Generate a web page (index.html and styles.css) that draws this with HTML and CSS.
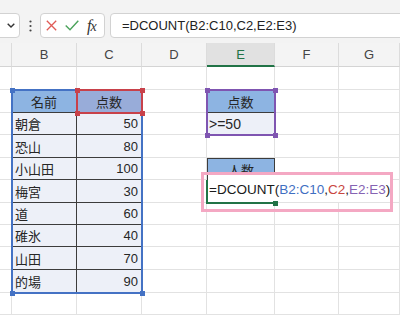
FILE: index.html
```html
<!DOCTYPE html>
<html lang="ja">
<head>
<meta charset="utf-8">
<title>DCOUNT</title>
<link rel="stylesheet" href="styles.css">
</head>
<body>
<div class="app">
  <div class="toolbar">
    <div class="namebox">
      <svg class="chev" width="8" height="5" viewBox="0 0 8 5"><polyline points="0.7,0.7 4,4 7.3,0.7" fill="none" stroke="#333" stroke-width="1.4"/></svg>
    </div>
    <div class="dots">
      <svg width="3" height="12" viewBox="0 0 3 12"><circle cx="1.5" cy="1.5" r="1.1" fill="#444"/><circle cx="1.5" cy="6" r="1.1" fill="#444"/><circle cx="1.5" cy="10.5" r="1.1" fill="#444"/></svg>
    </div>
    <div class="btns">
      <svg class="ico-x" width="11" height="11" viewBox="0 0 11 11"><path d="M0.8 0.8 L10.2 10.2 M10.2 0.8 L0.8 10.2" stroke="#e05a55" stroke-width="1.3" fill="none"/></svg>
      <svg class="ico-ok" width="14" height="11" viewBox="0 0 14 11"><path d="M0.7 5.6 L5 9.8 L13.3 0.8" stroke="#4ba35b" stroke-width="1.4" fill="none"/></svg>
      <span class="fx"><i>f</i><i class="fxx">x</i></span>
    </div>
    <div class="fbar">=DCOUNT(B2:C10,C2,E2:E3)</div>
  </div>

  <div class="sheet">
    <!-- column headers -->
    <div class="ch"></div>
    <div class="ch">B</div>
    <div class="ch">C</div>
    <div class="ch">D</div>
    <div class="ch sel">E</div>
    <div class="ch">F</div>
    <div class="ch">G</div>

    <!-- row 1 -->
    <div class="c"></div><div class="c"></div><div class="c"></div><div class="c"></div><div class="c"></div><div class="c"></div><div class="c"></div>
    <!-- row 2 -->
    <div class="c"></div>
    <div class="c th">名前</div>
    <div class="c th th2">点数</div>
    <div class="c"></div>
    <div class="c th">点数</div>
    <div class="c"></div><div class="c"></div>
    <!-- row 3 -->
    <div class="c"></div>
    <div class="c td name">朝倉</div>
    <div class="c td num">50</div>
    <div class="c"></div>
    <div class="c td crit">&gt;=50</div>
    <div class="c"></div><div class="c"></div>
    <!-- row 4 -->
    <div class="c"></div>
    <div class="c td name">恐山</div>
    <div class="c td num">80</div>
    <div class="c"></div><div class="c"></div><div class="c"></div><div class="c"></div>
    <!-- row 5 -->
    <div class="c"></div>
    <div class="c td name">小山田</div>
    <div class="c td num">100</div>
    <div class="c"></div>
    <div class="c th boxed">人数</div>
    <div class="c"></div><div class="c"></div>
    <!-- row 6 -->
    <div class="c"></div>
    <div class="c td name">梅宮</div>
    <div class="c td num">30</div>
    <div class="c"></div><div class="c"></div><div class="c"></div><div class="c"></div>
    <!-- row 7 -->
    <div class="c"></div>
    <div class="c td name">道</div>
    <div class="c td num">60</div>
    <div class="c"></div><div class="c"></div><div class="c"></div><div class="c"></div>
    <!-- row 8 -->
    <div class="c"></div>
    <div class="c td name">碓氷</div>
    <div class="c td num">40</div>
    <div class="c"></div><div class="c"></div><div class="c"></div><div class="c"></div>
    <!-- row 9 -->
    <div class="c"></div>
    <div class="c td name">山田</div>
    <div class="c td num">70</div>
    <div class="c"></div><div class="c"></div><div class="c"></div><div class="c"></div>
    <!-- row 10 -->
    <div class="c"></div>
    <div class="c td name">的場</div>
    <div class="c td num">90</div>
    <div class="c"></div><div class="c"></div><div class="c"></div><div class="c"></div>
    <!-- row 11 -->
    <div class="c"></div><div class="c"></div><div class="c"></div><div class="c"></div><div class="c"></div><div class="c"></div><div class="c"></div>

    <!-- reference highlights -->
    <div class="rng rng-blue"><i class="hd tl"></i><i class="hd tr"></i><i class="hd bl"></i><i class="hd br"></i></div>
    <div class="rng rng-red"><i class="hd tl"></i><i class="hd tr"></i><i class="hd bl"></i><i class="hd br"></i></div>
    <div class="rng rng-purple"><i class="hd tl"></i><i class="hd tr"></i><i class="hd bl"></i><i class="hd br"></i></div>

    <!-- in-cell editing -->
    <div class="edittext"><span>=DCOUNT(</span><span class="r-blue">B2:C10</span><span>,</span><span class="r-red">C2</span><span>,</span><span class="r-purple">E2:E3</span><span>)</span><span class="caret"></span></div>
    <div class="editcell"><i class="fill"></i></div>
    <div class="pink"></div>
  </div>
</div>
</body>
</html>
```

FILE: styles.css
```css
* { box-sizing: border-box; }

html, body {
  margin: 0;
  padding: 0;
}

body {
  width: 400px;
  height: 316px;
  overflow: hidden;
  background: #ffffff;
  font-family: "Noto Sans CJK JP", sans-serif;
  color: #222;
}

.app {
  width: 400px;
  height: 316px;
  overflow: hidden;
}

/* ---------- toolbar ---------- */
.toolbar {
  height: 43px;
  background: #f3f3f3;
  display: flex;
  align-items: flex-start;
  padding-top: 13px;
}

.namebox {
  width: 30px;
  height: 25px;
  margin-left: -10px;
  background: #fff;
  border: 1px solid #d2d2d2;
  border-radius: 4px;
  display: flex;
  align-items: center;
  justify-content: flex-end;
  padding-right: 4px;
}

.dots {
  width: 20px;
  height: 25px;
  display: flex;
  align-items: center;
  justify-content: center;
}

.btns {
  width: 65px;
  height: 25px;
  background: #fff;
  border: 1px solid #d2d2d2;
  border-radius: 4px;
  display: flex;
  align-items: center;
  padding-left: 5px;
}

.ico-x { margin-right: 8px; }
.ico-ok { margin-right: 8px; margin-top: -1px; }

.fx {
  font-family: "Liberation Serif", serif;
  font-size: 16px;
  color: #333;
  line-height: 1;
  white-space: nowrap;
}
.fx i { font-style: italic; }
.fxx { font-size: 14px; margin-left: -1px; }

.fbar {
  flex: 1;
  height: 25px;
  margin-left: 5px;
  margin-right: -10px;
  background: #fff;
  border: 1px solid #d2d2d2;
  border-radius: 4px;
  padding-left: 11px;
  font-family: "Liberation Sans", sans-serif;
  font-size: 13px;
  line-height: 23px;
  color: #222;
  white-space: nowrap;
}

/* ---------- sheet ---------- */
.sheet {
  position: relative;
  display: grid;
  grid-template-columns: 12px 65px 65px 65px 68px 64px 61px;
  grid-template-rows: 24px 23px 23px 22px 23px 22px 23px 22px 22px 23px 23px 22px;
}

.ch {
  background: #f4f4f4;
  border-right: 1px solid #dcdcdc;
  border-bottom: 1px solid #d4d4d4;
  font-family: "Liberation Sans", sans-serif;
  font-size: 13px;
  color: #444;
  display: flex;
  align-items: center;
  justify-content: center;
}

.ch.sel {
  background: #e1e1e1;
  color: #217346;
  border-bottom: 2px solid #217346;
}

.c {
  border-right: 1px solid #e2e2e2;
  border-bottom: 1px solid #e2e2e2;
  display: flex;
  align-items: center;
  white-space: nowrap;
  font-size: 13px;
  color: #262626;
}

.th {
  background: #8db4e2;
  border-color: #3c3c3c;
  justify-content: center;
}

.th2 { background: #98acd9; }

.td {
  background: #edf0f8;
  border-color: #3c3c3c;
}

.name { padding-left: 3px; }

.num {
  justify-content: flex-end;
  padding-right: 3px;
  font-family: "Liberation Sans", sans-serif;
  font-size: 13px;
}

.crit {
  padding-left: 2px;
  font-family: "Liberation Sans", sans-serif;
  font-size: 14px;
}

.boxed { border: 1px solid #3c3c3c; }

/* reference highlight ranges */
.rng {
  position: absolute;
  inset: -1px;
  border: 2px solid;
}
.rng-blue { grid-column: 2 / 4; grid-row: 3 / 12; border-color: #4472c4; color: #4472c4; }
.rng-red { grid-column: 3 / 4; grid-row: 3 / 4; border-color: #c8414a; color: #c8414a; }
.rng-purple { grid-column: 5 / 6; grid-row: 3 / 5; border-color: #7f55b1; color: #7f55b1; }

.hd {
  position: absolute;
  width: 5px;
  height: 5px;
  background: currentColor;
}
.hd.tl { left: -3.5px; top: -3.5px; }
.hd.tr { right: -3.5px; top: -3.5px; }
.hd.bl { left: -3.5px; bottom: -3.5px; }
.hd.br { right: -3.5px; bottom: -3.5px; }

/* in-cell edit */
.edittext {
  position: absolute;
  grid-column: 5 / 8;
  grid-row: 7 / 8;
  top: -6px;
  left: 1px;
  right: 10px;
  bottom: 1px;
  background: #fff;
  display: flex;
  align-items: center;
  padding-top: 3px;
  padding-left: 1px;
  font-family: "Liberation Sans", sans-serif;
  font-size: 13.5px;
  color: #1a1a1a;
  white-space: nowrap;
}

.r-blue { color: #3f6fc2; }
.r-red { color: #c9463f; }
.r-purple { color: #8663b3; }

.caret {
  width: 1px;
  height: 19px;
  background: #000;
  margin-left: 1px;
}

.editcell {
  position: absolute;
  grid-column: 5 / 6;
  grid-row: 7 / 8;
  left: -1px;
  top: 0;
  right: 0;
  bottom: -1px;
  border-left: 2px solid #217346;
  border-bottom: 2px solid #217346;
}

.fill {
  position: absolute;
  right: -3px;
  bottom: -4px;
  width: 5px;
  height: 5px;
  background: #217346;
}

.pink {
  position: absolute;
  grid-column: 5 / 8;
  grid-row: 7 / 8;
  top: -8px;
  left: -6px;
  right: 7px;
  bottom: -9px;
  border: 3px solid #f4a8c3;
}
```
